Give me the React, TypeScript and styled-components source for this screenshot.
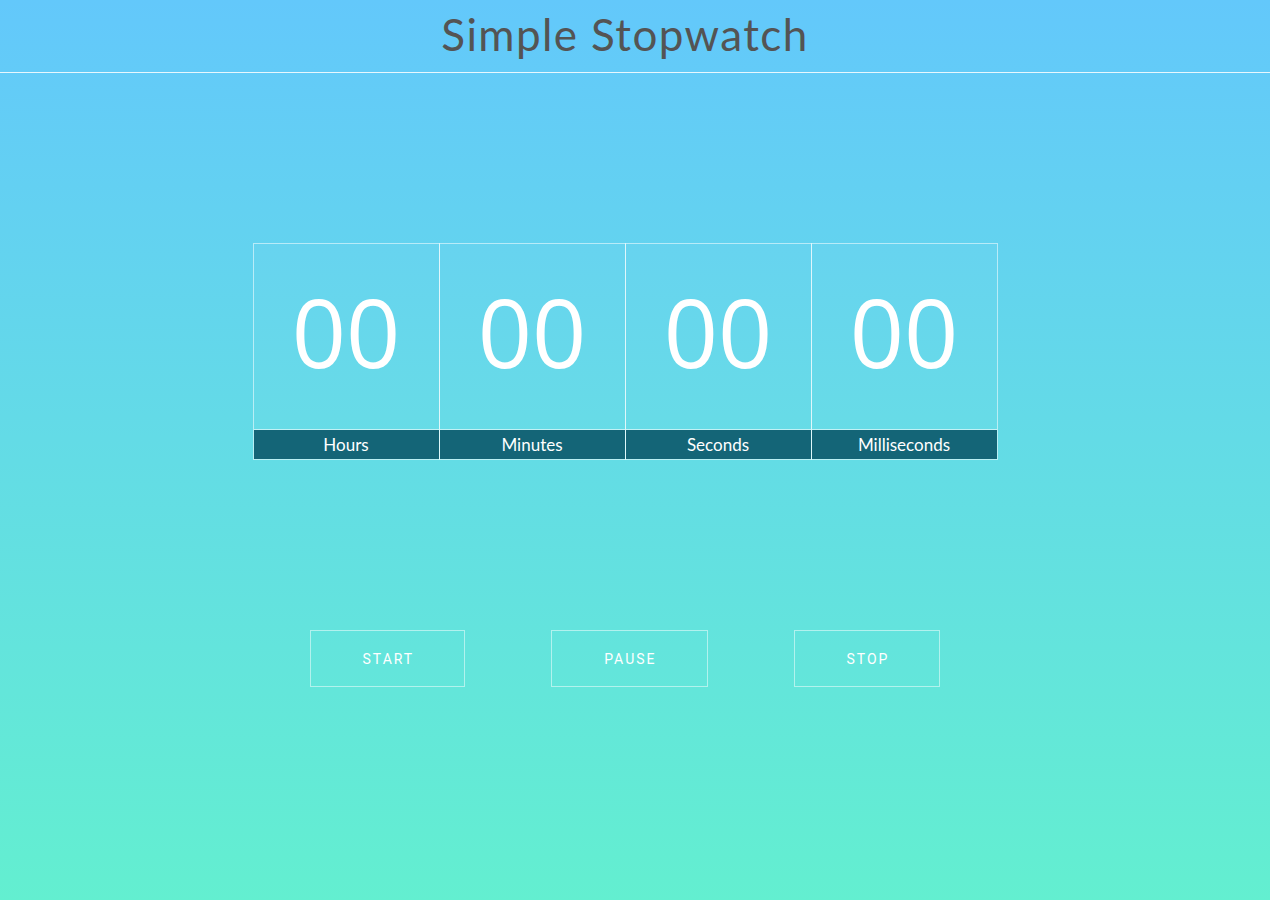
import styled, { createGlobalStyle } from "styled-components";

const GlobalStyle = createGlobalStyle`
  html, body {
    margin: 0;
    padding: 0;
    height: 100%;
  }
  body {
    background: linear-gradient(to bottom, #63c8fb 0%, #63efd0 100%);
    font-family: "Lato", "DejaVu Sans", sans-serif;
    min-height: 900px;
  }
`;

const units = ["Hours", "Minutes", "Seconds", "Milliseconds"];
const buttons = ["Start", "Pause", "Stop"];

export default function App() {
  return (
    <>
      <GlobalStyle />
      <Header>
        <Title>Simple Stopwatch</Title>
      </Header>
      <Page>
        <Clock>
          {units.map((u) => (
            <Cell key={u}>
              <Digits>00</Digits>
              <Label>{u}</Label>
            </Cell>
          ))}
        </Clock>
        <Controls>
          {buttons.map((b) => (
            <Button key={b}>{b}</Button>
          ))}
        </Controls>
      </Page>
    </>
  );
}

const Header = styled.header`
  height: 72px;
  padding-right: 20px;
  border-bottom: 1px solid rgba(255, 255, 255, 0.85);
  display: flex;
  justify-content: center;
  align-items: center;
`;

const Title = styled.h1`
  margin: 0;
  font-family: "Lato", sans-serif;
  font-weight: 400;
  font-size: 44px;
  letter-spacing: 1.4px;
  color: #545454;
  position: relative;
  top: -2px;
`;

const Page = styled.main`
  display: flex;
  flex-direction: column;
  align-items: center;
  padding-right: 20px;
`;

const Clock = styled.div`
  margin-top: 170px;
  display: flex;
`;

const Cell = styled.div`
  box-sizing: border-box;
  width: 187px;
  display: flex;
  flex-direction: column;
  border: 1px solid rgba(255, 255, 255, 0.55);
  margin-left: -1px;
  &:first-child {
    margin-left: 0;
  }
`;

const Digits = styled.div`
  height: 186px;
  display: flex;
  align-items: center;
  justify-content: center;
  color: #fff;
  font-family: "Open Sans", sans-serif;
  font-size: 95px;
  background: rgba(255, 255, 255, 0.03);
  border-bottom: 1px solid rgba(255, 255, 255, 0.6);
  padding-bottom: 12px;
  box-sizing: border-box;
`;

const Label = styled.div`
  height: 29px;
  background: #146577;
  color: #fff;
  font-size: 17px;
  display: flex;
  align-items: center;
  justify-content: center;
`;

const Controls = styled.div`
  margin-top: 170px;
  display: flex;
  gap: 86px;
`;

const Button = styled.button`
  height: 57px;
  padding: 0 50px 0 52px;
  background: transparent;
  border: 1px solid rgba(255, 255, 255, 0.5);
  color: #fff;
  font-family: "Roboto", sans-serif;
  font-weight: 400;
  font-size: 14px;
  letter-spacing: 2px;
  text-transform: uppercase;
  cursor: pointer;
`;
